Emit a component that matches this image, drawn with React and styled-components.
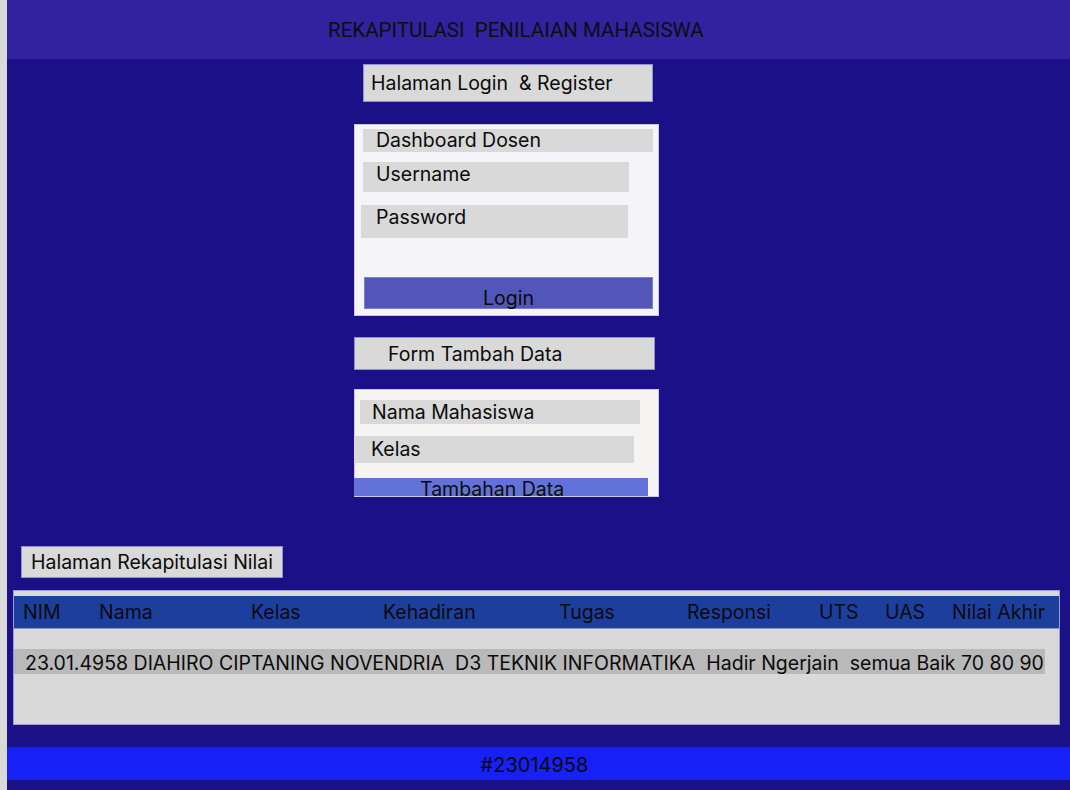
import styled, { createGlobalStyle } from 'styled-components';

const GlobalStyle = createGlobalStyle`
  html, body {
    margin: 0;
    padding: 0;
    background: #d9d9d9;
  }
  body {
    font-family: Inter, "Noto Sans", "Liberation Sans", sans-serif;
    color: #0b0b0b;
  }
  * { box-sizing: border-box; }
`;

const columns = [
  { label: 'NIM', x: 9 },
  { label: 'Nama', x: 85 },
  { label: 'Kelas', x: 237 },
  { label: 'Kehadiran', x: 369 },
  { label: 'Tugas', x: 545 },
  { label: 'Responsi', x: 673 },
  { label: 'UTS', x: 805 },
  { label: 'UAS', x: 871 },
  { label: 'Nilai Akhir', x: 938 },
];

const App = () => {
  return (
    <>
      <GlobalStyle />
      <Page>
        <Header>
          <HeaderTitle>REKAPITULASI&nbsp; PENILAIAN MAHASISWA</HeaderTitle>
        </Header>

        <Center>
          <Label $x={9} $w={290} $h={38} $pl={7} $mt={5}>Halaman Login&nbsp; &amp; Register</Label>

          <Card $h={192} $mt={22} $bg="#f4f4f9">
            <Field $x={9} $w={290} $h={23} $pl={13} $mt={4} $lh={23}>Dashboard Dosen</Field>
            <Field $x={9} $w={266} $h={30} $pl={13} $mt={10} $lh={24}>Username</Field>
            <Field $x={7} $w={267} $h={33} $pl={15} $mt={13} $lh={25}>Password</Field>
            <Button $x={10} $w={289} $h={32} $mt={39} $bg="#5156b8" $pt={9}>Login</Button>
          </Card>

          <Label $x={0} $w={301} $h={33} $pl={33} $mt={21}>Form Tambah Data</Label>

          <Card $h={108} $mt={19} $bg="#f6f3f3">
            <Field $x={6} $w={280} $h={29} $pl={12} $mt={10} $lh={24}>Nama Mahasiswa</Field>
            <Field $x={0} $w={280} $h={27} $pl={17} $mt={12} $lh={27}>Kelas</Field>
            <SmallButton>Tambahan Data</SmallButton>
          </Card>
        </Center>

        <Label $x={14} $w={262} $h={32} $pl={9} $mt={49}>Halaman Rekapitulasi Nilai</Label>

        <Table>
          <TableHead>
            {columns.map((c) => (
              <HeadCell key={c.label} $x={c.x}>{c.label}</HeadCell>
            ))}
          </TableHead>
          <DataRow>
            23.01.4958 DIAHIRO CIPTANING NOVENDRIA&nbsp; D3 TEKNIK INFORMATIKA&nbsp; Hadir Ngerjain&nbsp; semua Baik 70 80 90
          </DataRow>
        </Table>

        <Footer>#23014958</Footer>
      </Page>
    </>
  );
};

export default App;

const Page = styled.div`
  margin-left: 7px;
  width: 1063px;
  height: 790px;
  background: #1c1089;
  display: flex;
  flex-direction: column;
  overflow: hidden;
`;

const Header = styled.header`
  height: 59px;
  background: #33229f;
  display: flex;
  align-items: center;
  padding-left: 321px;
  padding-top: 1px;
`;

const HeaderTitle = styled.h1`
  margin: 0;
  font-family: Roboto, "Liberation Sans", sans-serif;
  font-weight: 400;
  font-size: 20.5px;
  color: #0d0d0d;
  letter-spacing: 0;
`;

const Center = styled.div`
  margin-left: 347px;
  width: 306px;
  display: flex;
  flex-direction: column;
`;

const Label = styled.div`
  margin-left: ${(p) => p.$x}px;
  margin-top: ${(p) => p.$mt}px;
  width: ${(p) => p.$w}px;
  height: ${(p) => p.$h}px;
  padding-left: ${(p) => p.$pl}px;
  background: #d9d9d9;
  border: 1px solid #928fcf;
  display: flex;
  align-items: center;
  font-size: 19.5px;
  white-space: nowrap;
`;

const Card = styled.div`
  width: 305px;
  height: ${(p) => p.$h}px;
  margin-top: ${(p) => p.$mt}px;
  background: ${(p) => p.$bg};
  border: 1px solid #c9c6e8;
  display: flex;
  flex-direction: column;
`;

const Field = styled.div`
  margin-left: ${(p) => p.$x - 1}px;
  margin-top: ${(p) => p.$mt}px;
  width: ${(p) => p.$w}px;
  height: ${(p) => p.$h}px;
  padding-left: ${(p) => p.$pl}px;
  line-height: ${(p) => p.$lh}px;
  background: #d9d9d9;
  font-size: 19.5px;
  white-space: nowrap;
`;

const Button = styled.div`
  margin-left: ${(p) => p.$x - 1}px;
  margin-top: ${(p) => p.$mt}px;
  width: ${(p) => p.$w}px;
  height: ${(p) => p.$h}px;
  padding-top: ${(p) => p.$pt}px;
  background: ${(p) => p.$bg};
  border: 1px solid #7c80d4;
  text-align: center;
  font-size: 19.5px;
  line-height: 22px;
`;

const SmallButton = styled.div`
  margin-left: -1px;
  margin-top: 15px;
  width: 294px;
  height: 18px;
  padding-left: 66px;
  background: #6272d8;
  font-size: 19.5px;
  line-height: 23px;
  white-space: nowrap;
`;

const Table = styled.div`
  margin-left: 6px;
  margin-top: 12px;
  width: 1047px;
  height: 135px;
  background: #d9d9d9;
  border: 1px solid #9d9ad3;
  padding-top: 5px;
  display: flex;
  flex-direction: column;
`;

const TableHead = styled.div`
  position: relative;
  height: 33px;
  background: #1c3f9e;
  border-bottom: 1px solid #8891c8;
`;

const HeadCell = styled.span`
  position: absolute;
  left: ${(p) => p.$x}px;
  top: 0;
  line-height: 33px;
  font-size: 19.5px;
  white-space: nowrap;
`;

const DataRow = styled.div`
  margin-top: 20px;
  width: 1031px;
  height: 25px;
  background: #b9b9b9;
  padding-left: 11px;
  font-size: 19.5px;
  line-height: 28px;
  white-space: nowrap;
`;

const Footer = styled.footer`
  margin-top: 22px;
  height: 33px;
  background: #1720f6;
  text-align: center;
  padding-right: 8px;
  font-size: 20px;
  line-height: 37px;
`;
